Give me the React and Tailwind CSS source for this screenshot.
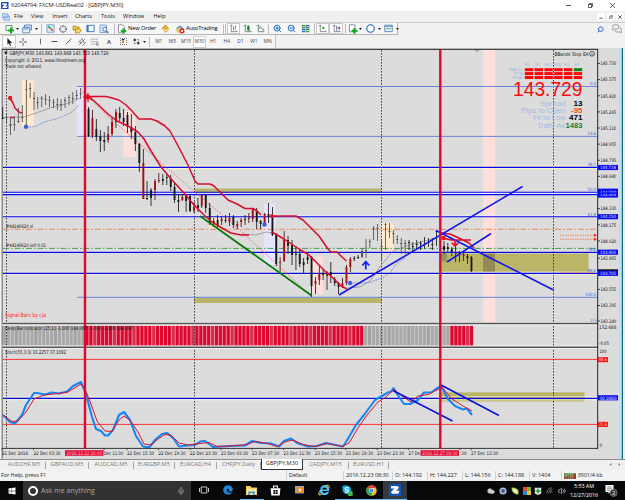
import React from "react";
import clsx from "clsx";
import { Mic, Search, MessagesSquare, Cloud, Wifi, Volume2, Crosshair, ZoomIn, ZoomOut, Clock } from "lucide-react";
import { FaWindows, FaEdge, FaInternetExplorer } from "react-icons/fa";

const UI = "font-['Open_Sans','Noto_Sans',sans-serif]";

// [x, high, low, bodyTop, bodyBottom, color]
const K = "#1a1a1a";
const R = "#a80f10";
const G = "#505050";
const candles = [
  [2.7, 107, 119, 118, 119, K],
  [6.5, 113, 124, 117, 118, G],
  [10.4, 117, 135, 124, 126, G],
  [14.3, 116, 131, 124, 125, G],
  [18.3, 108, 123, 121, 122, G],
  [22.3, 105, 122, 117, 118, G],
  [26.3, 80, 127, 89, 90, G],
  [30.1, 83, 98, 88, 89, G],
  [34, 92, 110, 98, 99, G],
  [37.7, 97, 109, 102, 103, G],
  [41.7, 96, 107, 98, 99, G],
  [45.6, 94, 105, 99, 100, G],
  [49.5, 96, 107, 100, 101, G],
  [53.4, 99, 108, 102, 103, G],
  [57.3, 98, 110, 104, 105, G],
  [61, 99, 111, 104, 105, G],
  [65, 97, 108, 100, 101, G],
  [69, 95, 105, 97, 98, G],
  [72.8, 92, 104, 98, 99, G],
  [76.7, 90, 100, 95, 96, G],
  [80.6, 88, 99, 93, 94, G],
  [88.5, 107, 137, 109, 136, K],
  [92.4, 110, 138, 118, 136, R],
  [96.3, 119, 141, 129, 137, K],
  [100.3, 130, 152, 136, 141, K],
  [104.2, 132, 151, 140, 142, K],
  [108.1, 126, 143, 134, 140, R],
  [112, 118, 136, 122, 134, R],
  [115.9, 109, 128, 112, 122, R],
  [119.7, 107, 121, 113, 118, K],
  [123.6, 109, 126, 118, 122, K],
  [127.4, 112, 133, 115, 127, K],
  [131.3, 114, 139, 127, 132, K],
  [135.3, 126, 151, 132, 144, K],
  [139.3, 143, 172, 144, 163, K],
  [143.3, 149, 199, 163, 199, R],
  [147, 181, 200, 198, 199, K],
  [151, 188, 206, 190, 198, K],
  [155, 179, 200, 181, 190, R],
  [158.8, 173, 183, 180, 181, R],
  [162.8, 174, 185, 179, 181, K],
  [166.8, 174, 185, 177, 178, K],
  [170.7, 175, 191, 178, 187, K],
  [174.5, 182, 203, 187, 200, K],
  [178.4, 194, 212, 200, 202, K],
  [182.3, 194, 201, 197, 200, R],
  [186.1, 194, 212, 195, 201, K],
  [190, 195, 212, 196, 211, K],
  [194, 202, 213, 207, 211, R],
  [197.9, 198, 212, 205, 208, K],
  [201.7, 194, 208, 195, 206, R],
  [205.7, 195, 213, 195, 208, K],
  [209.7, 203, 225, 208, 223, K],
  [213.7, 218, 227, 221, 223, K],
  [217.6, 215, 229, 220, 225, K],
  [221.6, 216, 225, 219, 221, R],
  [225.5, 215, 223, 220, 221, K],
  [229.4, 213, 226, 218, 222, R],
  [233.3, 215, 228, 217, 225, K],
  [237.2, 221, 229, 224, 226, R],
  [241.1, 218, 227, 220, 222, R],
  [245, 215, 225, 219, 220, K],
  [248.8, 213, 223, 218, 219, R],
  [252.7, 208, 222, 209, 219, R],
  [256.7, 208, 229, 211, 222, K],
  [260.6, 220, 229, 221, 224, K],
  [264.6, 213, 226, 214, 224, R],
  [268.5, 203, 223, 214, 217, K],
  [272.4, 207, 236, 216, 235, K],
  [276.2, 233, 266, 235, 264, K],
  [280.1, 257, 272, 262, 263, R],
  [284.1, 231, 262, 240, 261, R],
  [288, 236, 254, 240, 246, K],
  [292, 240, 265, 245, 255, K],
  [295.9, 246, 270, 254, 255, K],
  [299.7, 249, 267, 254, 264, K],
  [303.6, 258, 274, 262, 265, K],
  [307.6, 255, 264, 257, 260, K],
  [311.5, 256, 297, 257, 286, K],
  [315.4, 277, 294, 281, 284, R],
  [319.3, 266, 285, 273, 280, R],
  [323.1, 269, 280, 273, 275, K],
  [327, 271, 290, 272, 276, R],
  [330.8, 262, 283, 272, 275, K],
  [334.7, 277, 286, 279, 283, K],
  [338.5, 282, 294, 283, 287, K],
  [342.4, 278, 288, 283, 287, R],
  [346.4, 265, 285, 267, 283, R],
  [350.3, 257, 272, 259, 267, R],
  [354.2, 256, 261, 258, 259, K],
  [358.1, 255, 259, 257, 258, K],
  [362, 248, 258, 251, 257, G],
  [366, 239, 258, 250, 251, G],
  [369.8, 239, 248, 241, 242, G],
  [373.6, 226, 240, 228, 229, G],
  [377.5, 224, 241, 228, 229, G],
  [381.6, 239, 260, 246, 247, G],
  [385.5, 223, 250, 224, 225, G],
  [389.4, 223, 238, 231, 232, G],
  [393.3, 230, 244, 233, 234, G],
  [397.2, 235, 244, 239, 240, G],
  [401.2, 238, 254, 243, 244, G],
  [405.1, 240, 254, 243, 244, G],
  [409, 240, 250, 242, 243, K],
  [412.8, 242, 252, 246, 247, K],
  [416.7, 240, 250, 244, 245, K],
  [420.6, 241, 250, 243, 244, K],
  [424.5, 237, 249, 244, 245, K],
  [428.4, 238, 247, 242, 243, K],
  [432.3, 238, 250, 244, 245, K],
  [436.5, 230, 246, 231, 232, K],
  [444, 241, 254, 246, 250, K],
  [447.8, 243, 252, 247, 249, K],
  [451.7, 247, 256, 249, 252, K],
  [455.6, 244, 262, 253, 254, R],
  [459.5, 251, 262, 253, 255, K],
  [463.5, 251, 261, 254, 256, R],
  [467.4, 254, 264, 256, 258, K],
  [471.4, 256, 272, 257, 271, K],
];

const axis = [
  ["145.730", 63.5],
  ["145.575", 79.6],
  ["145.420", 95.8],
  ["145.265", 111.9],
  ["145.110", 128],
  ["144.955", 144.1],
  ["144.795", 160.3],
  ["144.640", 176.4],
  ["144.330", 208.6],
  ["144.175", 224.8],
  ["144.020", 240.9],
  ["143.865", 258.2],
  ["143.555", 289.4],
  ["143.395", 305.5],
  ["143.240", 321],
];

const blueTags = [
  ["144.728", 167.5],
  ["144.500", 191.2],
  ["144.460", 195],
  ["144.250", 216.7],
  ["143.904", 252.2],
  ["143.705", 273.3],
];

// the labels at 104, 411 and 459 are clipped by the event tags
const times = [
  ["21 Dec 2016", 2, 26],
  ["22 Dec 03:30", 33.5, 27],
  ["Dec 11:30", 104, 19],
  ["22 Dec 15:30", 127, 27],
  ["22 Dec 19:30", 158.5, 27],
  ["22 Dec 23:30", 190, 27],
  ["23 Dec 03:30", 221, 27],
  ["23 Dec 07:30", 252, 27],
  ["23 Dec 11:30", 283.5, 27],
  ["23 Dec 15:30", 315, 27],
  ["23 Dec 19:30", 346, 27],
  ["23 Dec 23:30", 377, 27],
  ["27 De", 408.5, 11.5],
  [":30", 460, 6.5],
  ["27 Dec 13:30", 471, 27],
];

const fibs = [
  ["0.0", 86.5],
  ["23.6", 136.5],
  ["38.2", 167],
  ["50.0", 192],
  ["61.8", 217],
  ["78.6", 252.5],
  ["88.6", 273],
  ["100.0", 297.4],
  ["113", 323.5],
];

const T = ({ x, y, w, s = 5, fill = "#111", children, ...rest }) => (
  <text x={x} y={y} textLength={w} lengthAdjust="spacingAndGlyphs" fontSize={s} fill={fill} {...rest}>
    {children}
  </text>
);

const DeepBars = () => {
  const bars = [];
  for (let i = 0; i < 120; i++) {
    const x = 3 + i * 3.925;
    const red = (x > 84 && x < 362) || x > 449;
    const soft = i % 5 === 3;
    bars.push(
      <rect
        key={i}
        x={x}
        y="325.8"
        width="3"
        height="20"
        fill={red ? (soft ? "#d62f50" : "#df062e") : soft ? "#a2a2a2" : "#a9a9a9"}
      />
    );
  }
  return (
    <g>
      <rect x="3" y="325.8" width="445" height="20" fill="#cdcdcd" />
      <rect x="86" y="325.8" width="277" height="20" fill="#e296a5" />
      <rect x="450" y="325.8" width="23" height="20" fill="#e296a5" />
      {bars}
    </g>
  );
};

const Chart = () => (
  <svg
    className="block shrink-0 font-['DejaVu_Sans_Condensed','DejaVu_Sans',sans-serif]"
    width="625"
    height="411"
    viewBox="0 48 625 411"
  >
    <rect x="0" y="48" width="625" height="411" fill="#dcdcdc" />
    <rect x="0" y="48" width="1.6" height="411" fill="#f4f4f4" />
    <rect x="1.6" y="48.6" width="1.1" height="410" fill="#707070" />

    {/* shaded zones */}
    <rect x="22" y="80" width="11.5" height="47" fill="#ffebcc" />
    <rect x="77" y="87" width="6.5" height="50" fill="#e4e5fa" />
    <rect x="123.5" y="111" width="12" height="46" fill="#ffdfdc" />
    <rect x="209.5" y="217" width="10" height="12" fill="#ffebcc" />
    <rect x="264" y="204" width="11.5" height="61" fill="#e4e5fa" />
    <rect x="311" y="257" width="12" height="37" fill="#ffdfdc" />
    <rect x="381.5" y="223" width="12" height="29" fill="#ffebcc" />
    <rect x="436" y="245" width="5" height="17" fill="#d5d9f0" />
    <rect x="483" y="50" width="12" height="273" fill="#ffdfdc" />
    <rect x="194" y="188.5" width="187.5" height="5.5" fill="#bbb56c" />
    <rect x="194" y="297.5" width="187.5" height="5.5" fill="#bbb56c" />
    <rect x="441" y="253.5" width="147.5" height="18.5" fill="#bbb568" />
    <rect x="441" y="253.5" width="6" height="8" fill="#8f965c" />
    <rect x="483" y="253.5" width="12" height="18.5" fill="#958956" />
    <rect x="441" y="392.3" width="143.5" height="9.2" fill="#bbb568" />
    <DeepBars />

    {/* session separators */}
    <g stroke="#333" strokeWidth="0.9" strokeDasharray="1.6 1.4">
      <path d="M6.5 50V448M194.5 50V448M381.5 50V448M553.5 50V448" />
    </g>

    {/* horizontal levels */}
    <path d="M77 86.5H597M77 136.4H597M77 297.3H597" stroke="#6685dc" />
    <path d="M3 165.9H597M3 168.7H597" stroke="#fdf9c5" strokeWidth="0.9" />
    <path d="M3 251.2H597M3 274.8H597M3 272.1H597" stroke="#f4f2cf" strokeWidth="0.8" />
    <path d="M3 193.5H597M3 215.3H597" stroke="#eaf0ff" strokeWidth="0.8" />
    <path d="M3 167.4H597M3 192.3H597M3 194.6H597M3 216.7H597M3 252.4H597M3 273.4H597" stroke="#0808ee" strokeWidth="1.1" />
    <path d="M3 229.3H597" stroke="#ee7a48" strokeWidth="0.9" strokeDasharray="6 2 1.5 2" />
    <path d="M3 248.4H597" stroke="#35984a" strokeWidth="0.9" strokeDasharray="6 2 1.5 2" />
    <path d="M560 235.3H595M560 239.3H595M560 272.6H595" stroke="#f08464" strokeDasharray="1.5 1" />
    <path d="M594 233.5l3 1.8-3 1.8zM594 237.5l3 1.8-3 1.8z" fill="#f03c20" />

    {/* moving averages */}
    <g fill="none" strokeWidth="0.7">
      <path d="M3 117.5L24 117 36 113 50 108 66 104 80 98" stroke="#888" />
      <path d="M27 127L36 126.5 44 122 56 119 66 115 72 112 79 105" stroke="#4267dc" strokeDasharray="1.6 1" />
      <path d="M80 89L112 120 139 143 160 162 196 193 240 230 311 296" stroke="#f0574f" strokeDasharray="1.8 1.2" />
      <path d="M242 234L256 235 266 232 274 233" stroke="#888" />
      <path d="M348 288L360 287 370 281 382 264 393 251 409 245 436 238" stroke="#888" />
      <path d="M350 283L368 283 382 278 390 273 396 264 405 258" stroke="#4267dc" strokeDasharray="1.6 1" />
    </g>

    {candles.map(([x, h, l, t, b, c]) => (
      <g key={x}>
        <rect x={x - 0.4} y={h} width="0.85" height={l - h} fill={c === R ? "#491014" : c} />
        <rect x={x - 0.9} y={t} width="1.9" height={b - t} fill={c} />
      </g>
    ))}

    {/* bands */}
    <g fill="none" stroke="#d70d2d" strokeWidth="1.5" strokeLinejoin="round">
      <path d="M10 98L13 103 15 108 19 112 22 113M10 117.5L14 117.5" />
      <path d="M87 96.5H106L112 98 119 100 126 105 132 111 139 119H151L157 121 165 126 170 131 176 142 188 165 195 181 198 184H210L214 186 219 191 228 200 237 204 245 208.5H253L257 211 261 215" />
      <path d="M87 96.5L93 100 108 114 117 121 128 126 138 132 144 139 151 151 161 167 172 180 184 193 194 205 204 215 212 222 222 228 231 233 241 235H249" />
      <path d="M272 216H296L303 220 310 227 319 236 328 249 331 252H337L342 257 346.5 261" />
      <path d="M272 232L284 239 299 249 309 255 316 262 325 271 334 279 341 286 347 289" />
      <path d="M441 233L450 234 459 238 469 243 474 248M443 238L451 240H471" />
    </g>
    <path d="M200 216L311.5 295.5" stroke="#087a0c" strokeWidth="1.8" />
    <path d="M339 295L522.5 186.5M436 230.5L553.5 290M447 262L491 233.5" stroke="#1414ec" strokeWidth="1.6" />
    <g fill="#e81818">
      <circle cx="10.2" cy="98" r="2.2" />
      <circle cx="87.5" cy="97" r="2.4" />
      <circle cx="272" cy="216" r="2" />
      <circle cx="443.5" cy="238" r="2.2" />
    </g>
    <g fill="#3262e0">
      <circle cx="26" cy="126.8" r="2.2" />
      <circle cx="264.5" cy="224.5" r="2.2" />
      <circle cx="350" cy="283" r="2.2" />
    </g>
    <path d="M365.8 269.5V262M362.3 265.5L365.8 261.7 369.3 265.5" fill="none" stroke="#1228f0" strokeWidth="1.8" />
    <path d="M455 239V246M451.8 242.8L455 246 458.2 242.8" fill="none" stroke="#e01830" strokeWidth="1.8" />
    <path d="M83 97h10M88 93v9" stroke="#d70d2d" strokeWidth="1.2" />

    {/* stochastic */}
    <path d="M3 359.4H597M3 424.4H597" stroke="#fc3434" />
    <path d="M3 396.8H597M3 399.9H597" stroke="#f7f5d4" strokeWidth="0.8" />
    <path d="M3 398.3H597" stroke="#0b0be8" strokeWidth="1.3" />
    <path
      d="M3 415L10 422 15 423.5 22 415 26 405 34 393H37L45 394.5 52 392.5 59 393.5 67 391.5 73 386 81 382 86 394 92 417 96 429 101 431 105 435.5H108L113 430 119 415 124 412 130 420 136 436 143 446.5 149 447.5 156 439 162 434 167 433 173 438 179 446.5 187 445.5 195 445 200 441.5 205 441 213 447 230 446 245 445.5 252 441 261 443 271 443.5 279 446.5 284 441 291 438.5 297 443 308 446.5 317 446 326 443 343 446.5 346 442 356 425 364 415 375 400 382 396 388 392.5 391 391.5 393.5 388 397 394 404 404H410L418 400 424 392.5H431L436 389 441 386 448 399 455 406 463 409.5 467 408.5 472 415"
      fill="none"
      stroke="#1686f5"
      strokeWidth="2.1"
      strokeLinejoin="round"
    />
    <path
      d="M3 415L12 421.5 18 421 26 412 34 399 44 395 58 393.5 68 392 76 387 81 384 85 389 91 404 97 421 105 431 112 431.5 119 420 124 416 130 420 138 432 144 444 151 445 158 439 165 434.5 171 435 179 443 188 445 200 443.5 209 442.5 217 446.5 230 446 247 444.5 255 441.5 266 443 277 446.5 286 441.5 293 440 303 444.5 314 446.5 328 443.5 342 446.5 349 443 358 428 367 415 378 402 386 397 394 389.5 402 396 411 402 418 396 428 394.5 437 390 442 387 452 399 463 406 472 411"
      fill="none"
      stroke="#db1430"
      strokeWidth="1"
    />
    <path d="M393 390.5L452.5 421M441 385L499 415.5" stroke="#1010dc" strokeWidth="1.6" />

    {/* panel borders */}
    <path d="M2 49.3H598" stroke="#444" strokeWidth="1.2" />
    <path d="M2 323.8H598M2 347.2H598" stroke="#f5f5f5" strokeWidth="3.2" />
    <path d="M2 323.5H598M2 347.2H598" stroke="#555" strokeWidth="1.5" />
    <path d="M2 448.4H598" stroke="#222" strokeWidth="0.9" />
    <path d="M597.7 49V449" stroke="#111" strokeWidth="0.9" />

    {/* event lines */}
    <path d="M85 49.5V449M440.3 49.5V449" stroke="#df0630" strokeWidth="2.4" />
    <path d="M474.5 50h5l-2.5 2.5z" fill="#aaa" />
    <path d="M4 51.8h3.6l-1.8 2.6z" fill="#111" />

    {/* labels */}
    <T x="9.5" y="55" w="99">GBPJPY,M30  143.861 143.868 143.723 143.729</T>
    <T x="5" y="61.8" w="80">Copyright © 2011,  www.lifesdream.org</T>
    <T x="5" y="67.5" w="37">Trade not allowed.</T>
    <T x="6" y="228" w="27" s="4.8">#44146620 sl</T>
    <T x="6" y="247" w="40" s="4.8">#44146620 sell 0.01</T>
    <T x="5" y="317" w="41" s="5.8" fill="#ff1c1c">Signal Bars by cja</T>
    <T x="5" y="330" w="128">Deep Bar Indicator (25,1) -1.000 144.067 -1.000 -1.000 144.067</T>
    <T x="5" y="353.6" w="61">Stoch(55,3,3) 33.2257 37.1082</T>

    {/* signal panel */}
    <T x="554.5" y="55.8" w="34">BBands Stop EA</T>
    <circle cx="592" cy="53.8" r="2.4" fill="none" stroke="#222" strokeWidth="0.7" />
    <path d="M590.8 53.4h.6M592.6 53.4h.6M590.8 55q1.2-1 2.4 0" stroke="#222" strokeWidth="0.5" fill="none" />
    <g fontFamily="Liberation Sans">
      {["M1", "M5", "M15", "M30", "H1", "H4"].map((m, i) => (
        <T key={m} x={525 + i * 9.9 - (m.length > 2 ? 0.5 : 0)} y="66.2" w={m.length > 2 ? 7.5 : 5} s="4" fill="#9db5db">
          {m}
        </T>
      ))}
      {["MACD", "STR", "EMA"].map((m, r) => (
        <g key={m}>
          <T x={m === "MACD" ? 509 : m === "STR" ? 513.5 : 512.5} y={71.3 + r * 3.9} w={m === "MACD" ? 13 : 9.5} s="3.4" fill="#9db5db">
            {m}
          </T>
          {[0, 1, 2, 3, 4, 5].map((c) => (
            <rect key={c} x={524.8 + c * 9.8} y={68.2 + r * 3.9} width="8.4" height="3" fill={r === 0 && c === 5 ? "#0b850b" : "#fb0707"} />
          ))}
        </g>
      ))}
      <T x="513" y="96" w="69.5" s="20" fill="#f80c0c">143.729</T>
      <T x="540" y="105.8" w="26" s="8" fill="#a3bbe0">Spread</T>
      <T x="521" y="113.1" w="45" s="8" fill="#a3bbe0">Pips to Open</T>
      <T x="533.5" y="120.3" w="32.5" s="8" fill="#a3bbe0">Hi to Low</T>
      <T x="538" y="127.8" w="27" s="8" fill="#a3bbe0">Daily Av</T>
      <T x="573.5" y="105.8" w="9" s="8" fill="#000" fontWeight="700">13</T>
      <T x="571" y="113.1" w="11.5" s="8" fill="#ff4a18" fontWeight="700">-95</T>
      <T x="569" y="120.3" w="13.5" s="8" fill="#000" fontWeight="700">471</T>
      <T x="565.5" y="127.8" w="17" s="8" fill="#15803a" fontWeight="700">1483</T>
    </g>

    {fibs.map(([t, y]) => (
      <T key={t} x={597 - (t.length > 4 ? 12 : t.length > 3 ? 9.5 : 7)} y={y - 1.2} w={t.length > 4 ? 11 : t.length > 3 ? 8.5 : 6.3} s="4.4" fill="#4468dc">
        {t}
      </T>
    ))}

    {/* price axis */}
    {axis.map(([t, y]) => (
      <g key={t}>
        <path d={`M597.5 ${y}h2.5`} stroke="#222" strokeWidth="0.8" />
        <T x="600.5" y={y + 1.8} w="15.8" s="4.8">{t}</T>
      </g>
    ))}
    <rect x="598" y="269.3" width="20" height="5" fill="#111" />
    {blueTags.map(([t, y]) => (
      <g key={t}>
        <rect x="598" y={y - 2.6} width="20" height="5.2" fill="#0b0bf2" />
        <T x="600" y={y + 1.4} w="16" s={y > 190 && y < 196 ? "3.2" : "4.4"} fill="#dfe4ff">{t}</T>
      </g>
    ))}
    <T x="599" y="329" w="17.5" s="4.8">152.688</T>
    <T x="599" y="345.4" w="10" s="4.8">-0.05</T>
    <T x="599.5" y="353" w="7" s="4.8">100</T>
    <T x="599.5" y="447" w="2.6" s="4.8">0</T>
    <rect x="598" y="357" width="10" height="5.2" fill="#f81616" />
    <T x="599" y="361.3" w="8" s="4.6" fill="#ffd9d9">88.6</T>
    <rect x="598" y="395.2" width="20" height="5.2" fill="#0b0bf2" />
    <T x="599.5" y="399.5" w="17" s="4.6" fill="#dfe4ff">50.0000</T>
    <rect x="598" y="421.8" width="10" height="5.2" fill="#f81616" />
    <T x="599" y="426.1" w="8" s="4.6" fill="#ffd9d9">21.6</T>

    {/* time axis */}
    {times.map(([t, x, w]) => (
      <g key={t}>
        <path d={`M${x} 448.5v1.6`} stroke="#222" strokeWidth="0.7" />
        <T x={x} y="454.7" w={w} s="4.8">{t}</T>
      </g>
    ))}
    <rect x="65" y="450.2" width="38.5" height="5.6" fill="#e00d36" />
    <T x="66.5" y="454.8" w="35.5" s="4.8" fill="#ffc4ce">2016.12.22 10:00</T>
    <rect x="420.5" y="450.2" width="38.5" height="5.6" fill="#e00d36" />
    <T x="422" y="454.8" w="35.5" s="4.8" fill="#ffc4ce">2016.12.27 09:30</T>

    {/* window edge */}
    <rect x="618.6" y="48" width="3.2" height="411" fill="#c3dcf0" />
    <rect x="621.8" y="48" width="1.2" height="411" fill="#176a78" />
    <rect x="623" y="48" width="2" height="411" fill="#e6eef2" />
  </svg>
);

const Slot = ({ w, className, children }) => (
  <span className={clsx("flex h-full shrink-0 items-center justify-center", w, className)}>{children}</span>
);

const Caret = ({ w = "w-[5px]" }) => (
  <Slot w={w}>
    <svg width="3" height="2" viewBox="0 0 3 2"><path d="M0 0h3L1.5 2z" fill="#222" /></svg>
  </Slot>
);

const Sep = ({ w = "w-[6px]" }) => (
  <Slot w={w}>
    <span className="h-[10px] w-px bg-[#bdbdbd]" />
  </Slot>
);

const Ico = ({ children, size = 10 }) => (
  <svg width={size} height={size} viewBox="0 0 10 10" fill="none">{children}</svg>
);

const Axes = () => <path d="M2.5 1v7.5H9M1 2.5L2.5 1 4 2.5M7.7 7L9.2 8.5" stroke="#5c6470" strokeWidth="0.8" />;

const Toolbar = () => (
  <div className="flex h-[13px] shrink-0 items-stretch border-t border-[#cfcfcf] bg-[#f1f1f1]">
    <div className="flex w-[398px] items-center border-r border-b border-[#b5b5b5] bg-[#f6f6f6] pl-[4px]">
      <Slot w="w-[11px]">
        <Ico>
          <path d="M1 1.5h6v5H1z" fill="#fff" stroke="#3d7f4c" strokeWidth="0.8" />
          <path d="M6 3.5v6M3 6.5h6" stroke="#14ad21" strokeWidth="2.2" />
        </Ico>
      </Slot>
      <Caret w="w-[5px]" />
      <Slot w="w-[14px]">
        <Ico>
          <path d="M2.5 1h7v5h-7z" fill="#c8ddf5" stroke="#4e79ae" strokeWidth="0.8" />
          <path d="M.7 3.5h7v5.3h-7z" fill="#eaf3fd" stroke="#4e79ae" strokeWidth="0.8" />
          <path d="M1.5 5h5" stroke="#5b8bca" />
        </Ico>
      </Slot>
      <Caret w="w-[5px]" />
      <Sep w="w-[5px]" />
      <Slot w="w-[12px]">
        <Ico size={9}>
          <path d="M1 .8h8v8.4H1z" fill="#d9edff" stroke="#5188c5" strokeWidth="0.8" />
          <path d="M2.5 2.5L5 5" stroke="#1ba12a" strokeWidth="1.9" />
          <path d="M5 5l2.5 2.5" stroke="#ec4824" strokeWidth="1.9" />
        </Ico>
      </Slot>
      <Slot w="w-[14px]"><Crosshair size={8} color="#4c5361" strokeWidth={2} /></Slot>
      <Slot w="w-[14px]">
        <Ico>
          <path d="M1 2h3l1 1h2v3H1z" fill="#f3c849" stroke="#a87b16" strokeWidth="0.7" />
          <path d="M3.5 5h3l1-1.2L9.3 7 7 9H3.5z" fill="#f6d467" stroke="#a87b16" strokeWidth="0.7" />
        </Ico>
      </Slot>
      <Slot w="w-[13px]">
        <Ico size={9}>
          <path d="M1 1.5h8v7H1z" fill="#fff" stroke="#2f6fb6" />
          <path d="M1 1.5h2v7H1z" fill="#3c7fc7" />
        </Ico>
      </Slot>
      <Slot w="w-[14px]">
        <Ico>
          <path d="M1 1h6.5v7.5H1z" fill="#dcebfa" stroke="#6a94c4" strokeWidth="0.8" />
          <circle cx="5.8" cy="5.3" r="2" fill="#fff" stroke="#4376b4" />
          <path d="M7.3 7L9.3 9" stroke="#4376b4" strokeWidth="1.2" />
        </Ico>
      </Slot>
      <Sep w="w-[6px]" />
      <Slot w="w-[10px]">
        <Ico>
          <path d="M1.5.8h4l2 2v6h-6z" fill="#fff" stroke="#6d7c85" strokeWidth="0.8" />
          <path d="M6.5 4.2v5.4M3.8 6.9h5.4" stroke="#18ac24" strokeWidth="2" />
        </Ico>
      </Slot>
      <span className="w-[30px] shrink-0 pl-px text-[5.7px] tracking-[-0.12px] whitespace-nowrap">New Order</span>
      <Slot w="w-[16px]">
        <Ico size={9}>
          <path d="M1 5.3L4.8 1 9 5.6 5.2 9z" fill="#e7b232" stroke="#9f6f10" strokeWidth="0.7" />
          <path d="M1 5.5L5 7.5 9 5.6" stroke="#fff0b4" />
        </Ico>
      </Slot>
      <Slot w="w-[13px]">
        <Ico>
          <path d="M1.5 5q3-6 7 0z" fill="#76a9e0" stroke="#3c6ba6" strokeWidth="0.6" />
          <circle cx="4" cy="6.2" r="2.5" fill="#eac05a" />
          <circle cx="7" cy="7" r="2.5" fill="#e32a1e" />
          <path d="M6.1 6.1h1.8v1.8H6.1z" fill="#fff" />
        </Ico>
      </Slot>
      <span className="w-[36px] shrink-0 text-[5.7px] tracking-[-0.1px] whitespace-nowrap">AutoTrading</span>
      <Sep w="w-[2px]" />
      <Sep w="w-[3px]" />
      <Slot w="w-[13px]" className="border border-[#c9c9c9] bg-white">
        <Ico size={9}><Axes /><path d="M5 3v4M7 2v4M7 2.5h1" stroke="#22923a" strokeWidth="0.9" /></Ico>
      </Slot>
      <Slot w="w-[15px]">
        <Ico size={9}><Axes /><path d="M4.5 2.5h3V7h-3z" fill="#19a93a" /><path d="M6 1v7" stroke="#146f26" strokeWidth="0.7" /></Ico>
      </Slot>
      <Slot w="w-[11px]">
        <Ico size={9}><Axes /><path d="M3 5.5q2-4 3-1t3 1" stroke="#22923a" strokeWidth="0.9" /></Ico>
      </Slot>
      <Sep w="w-[5px]" />
      <Slot w="w-[13px]"><ZoomIn size={9} color="#2f72c1" strokeWidth={2.6} fill="#cfe6fb" /></Slot>
      <Slot w="w-[14px]"><ZoomOut size={9} color="#2f72c1" strokeWidth={2.6} fill="#cfe6fb" /></Slot>
      <Slot w="w-[14px]">
        <Ico size={9}>
          <path d="M1 1h3.8v3.8H1zM5.4 5.4h3.8v3.8H5.4z" fill="#2b9a3e" />
          <path d="M5.4 1h3.8v3.8H5.4zM1 5.4h3.8v3.8H1z" fill="#2b5fb4" />
          <path d="M1.6 3h2.6M6 3h2.6M1.6 7.4h2.6M6 7.4h2.6" stroke="#fff" />
        </Ico>
      </Slot>
      <Sep w="w-[4px]" />
      <Slot w="w-[13px]" className="border border-[#c9c9c9] bg-white">
        <Ico size={9}><Axes /><path d="M5 2.5v4L8 4.5z" fill="#18a92e" /></Ico>
      </Slot>
      <Slot w="w-[14px]" className="border border-[#c9c9c9] bg-white">
        <Ico size={9}><Axes /><path d="M5.3 2v5.5" stroke="#2a62a9" /><path d="M9 2.5v4L6 4.5z" fill="#c23324" /></Ico>
      </Slot>
      <Sep w="w-[4px]" />
      <Slot w="w-[11px]">
        <Ico>
          <path d="M1.5.8h5.3v7H1.5z" fill="#fff" stroke="#6d7c85" strokeWidth="0.8" />
          <path d="M6.5 4v5.8M3.6 6.9h5.8" stroke="#18ac24" strokeWidth="2.2" />
        </Ico>
      </Slot>
      <Caret w="w-[5px]" />
      <Slot w="w-[14px]"><Clock size={9} color="#1d65bd" strokeWidth={3} fill="#fff" /></Slot>
      <Caret w="w-[4px]" />
      <Slot w="w-[14px]">
        <Ico size={9}>
          <path d="M.8 1.3h8.4v7.2H.8z" fill="#eaf3fc" stroke="#4b7cb3" strokeWidth="0.9" />
          <path d="M.8 2.5h8.4" stroke="#4b7cb3" />
          <path d="M2 5.8l2-1 2 1 2-1.3" stroke="#27923b" strokeWidth="0.8" />
        </Ico>
      </Slot>
      <Caret w="w-[4px]" />
    </div>
    <div className="ml-auto flex items-center gap-[8px] pr-[3px]">
      <Search size={7} color="#3b69d4" strokeWidth={3.4} className="-scale-x-100" />
      <MessagesSquare size={10} color="#8f8f8f" strokeWidth={2} />
    </div>
  </div>
);

const frames = ["M1", "M5", "M15", "M30", "H1", "H4", "D1", "W1", "MN"];

const DrawBar = () => (
  <div className="flex h-[13px] shrink-0 bg-[#f1f1f1]">
    <div className="flex w-[276px] items-center border-r border-[#c4c4c4] bg-[#f6f6f6] pl-[2px]">
      <Slot w="w-[14px]" className="border border-[#cdcdcd] bg-white">
        <Ico size={8}><path d="M3 0v8.5l2-1.8L6.3 10l1.4-.7-1.4-3H9z" fill="#222" /></Ico>
      </Slot>
      <Slot w="w-[14px]"><Ico size={8}><path d="M5 0v4M5 6v4M0 5h4M6 5h4" stroke="#444" /></Ico></Slot>
      <Slot w="w-[3px]" />
      <Slot w="w-[14px]"><Ico size={7}><path d="M5 1v8" stroke="#333" /></Ico></Slot>
      <Slot w="w-[14px]"><Ico size={7}><path d="M1 5h8" stroke="#333" strokeWidth="1.3" /></Ico></Slot>
      <Slot w="w-[14px]"><Ico size={7}><path d="M1 9l8-8" stroke="#333" /></Ico></Slot>
      <Slot w="w-[13px]">
        <Ico size={8}><path d="M0 6l6-6M1 9l8-8M5 10l5-5M2 3.5l2 4M5 1l3 6" stroke="#555" strokeWidth="0.8" /></Ico>
      </Slot>
      <Slot w="w-[14px]">
        <Ico size={8}><path d="M0 1.5h9M0 4.5h9M0 7.5h6" stroke="#666" strokeDasharray="1.5 .6" strokeWidth="0.8" /><path d="M7 6.5h3M7 9h3M7 6v3" stroke="#444" strokeWidth="0.7" /></Ico>
      </Slot>
      <Slot w="w-[14px]" className="text-[6px] font-semibold text-[#333]">A</Slot>
      <Slot w="w-[14px]"><span className="flex size-[7px] items-center justify-center border border-dotted border-[#777] text-[5px] leading-none font-bold">T</span></Slot>
      <Slot w="w-[12px]">
        <Ico size={7}><path d="M0 3l2.5-2.5L5 3 2.5 5.5zM5 7l2.5-2.5L10 7 7.5 9.5z" fill="#444" /><path d="M2 6v2h2M6 2h2v2" stroke="#444" strokeWidth="0.9" /></Ico>
      </Slot>
      <Caret w="w-[5px]" />
      <Sep w="w-[5px]" />
      {frames.map((f) => (
        <span
          key={f}
          className={clsx(
            "flex h-[12px] w-[13.6px] shrink-0 items-center justify-center text-[4.9px] text-[#444]",
            f === "M30" && "border border-[#cfcfcf] bg-white"
          )}
        >
          {f}
        </span>
      ))}
    </div>
  </div>
);

const menus = [
  ["File", "w-[17px]"],
  ["View", "w-[21.5px]"],
  ["Insert", "w-[22.5px]"],
  ["Charts", "w-[26px]"],
  ["Tools", "w-[22px]"],
  ["Window", "w-[30.5px]"],
  ["Help", "w-[14px]"],
];

const Logo = ({ size }) => (
  <svg width={size} height={size} viewBox="0 0 16 16">
    <rect width="16" height="16" rx="1" fill="#1253b8" />
    <path d="M3 2.5h8l2.5 2.5-4 4H14L12.5 13H4.5L2.5 11l4.5-5H2.5z" fill="#fff" />
  </svg>
);

const Header = () => (
  <>
    <div className="flex h-[11px] shrink-0 items-center bg-white pl-px">
      <Logo size={7.5} />
      <span className="ml-[2.5px] text-[5.7px] tracking-[-0.09px] whitespace-nowrap text-[#222]">
        92044794: FXCM-USDReal02 - [GBPJPY,M30]
      </span>
      <div className="ml-auto flex items-center gap-[17px] pr-[10px] text-[#333]">
        <Ico size={5}><path d="M0 5h10" stroke="#222" strokeWidth="1.6" /></Ico>
        <Ico size={5}><path d="M.8 3h6.2v6.2H.8zM3 3V.8h6.2V7H7" stroke="#222" strokeWidth="1.5" /></Ico>
        <Ico size={5}><path d="M0 0l10 10M10 0L0 10" stroke="#222" strokeWidth="1.4" /></Ico>
      </div>
    </div>
    <div className="flex h-[11px] shrink-0 items-center bg-[#f0f0f0] pl-[2px] text-[5.6px] text-[#111]">
      <Slot w="w-[12px]" className="justify-start">
        <Ico size={8}>
          <path d="M.5 1h7v5h-7zM2.5 4h7v5h-7z" fill="#d5e8fb" stroke="#5d97d6" strokeWidth="0.9" />
        </Ico>
      </Slot>
      {menus.map(([m, w]) => (
        <span key={m} className={clsx("shrink-0", w)}>{m}</span>
      ))}
      <div className="ml-auto flex items-center gap-[1.5px] pr-px">
        <Slot w="w-[8px]" className="h-[7px]! bg-white"><Ico size={4}><path d="M1 8h8" stroke="#333" strokeWidth="2" /></Ico></Slot>
        <Slot w="w-[8px]" className="h-[7px]! bg-white"><Ico size={4}><path d="M1 4h5v5H1zM4 3V1h5v5H7" stroke="#4b5e7c" strokeWidth="1.6" /></Ico></Slot>
        <Slot w="w-[8px]" className="h-[7px]! bg-white"><Ico size={4}><path d="M1 1l8 8M9 1L1 9" stroke="#333" strokeWidth="2" /></Ico></Slot>
      </div>
    </div>
  </>
);

const tabs = [
  ["AUDCHF,M5", "w-[43px]"],
  ["GBPAUD,M5", "w-[43px]"],
  ["AUDCAD,M5", "w-[45px]"],
  ["EURGBP,M5", "w-[41px]"],
  ["EURCAD,H4", "w-[42px]"],
  ["CHFJPY,Daily", "w-[44px]"],
  ["GBPJPY,M30", "w-[42px]"],
  ["CADJPY,M15", "w-[46px]"],
  ["EURUSD,H1", "w-[40px]"],
];

const Tabs = () => (
  <div className="flex h-[11px] shrink-0 items-start border-t border-[#8d8d8d] bg-[#f0f0f0] pl-[3px] text-[5.7px] text-[#777]">
    {tabs.map(([t, w]) => (
      <span
        key={t}
        className={clsx(
          "flex shrink-0 items-center justify-center whitespace-nowrap",
          w,
          t === "GBPJPY,M30" ? "-mt-px h-[11px] border border-t-0 border-[#333] bg-white text-[#222]" : "my-[1.5px] h-[7px] border-r border-[#a5a5a5]"
        )}
      >
        {t}
      </span>
    ))}
    <div className="ml-auto flex h-[9px] items-center gap-[6px] pr-[4px]">
      <Ico size={3}><path d="M8 0v10L2 5z" fill="#777" /></Ico>
      <Ico size={3}><path d="M2 0v10l6-5z" fill="#777" /></Ico>
    </div>
  </div>
);

const status = [
  ["Default", "w-[57px]"],
  ["2016.12.23 08:30", "w-[49px]"],
  ["O: 144.192", "w-[35px]"],
  ["H: 144.227", "w-[35px]"],
  ["L: 144.156", "w-[33px]"],
  ["C: 144.188", "w-[34px]"],
  ["V: 1404", "w-[32px]"],
];

const StatusBar = () => (
  <div className="flex h-[11px] shrink-0 items-center bg-[#f2f2f2] text-[5.5px] tracking-[-0.05px] text-[#222]">
    <span className="w-[286px] shrink-0 pl-px">For Help, press F1</span>
    {status.map(([t, w]) => (
      <span key={t} className={clsx("flex h-[9px] shrink-0 items-center border-l border-[#d2d2d2] pl-[2px] whitespace-nowrap", w)}>
        {t}
      </span>
    ))}
    <span className="flex h-[9px] items-center border-l border-[#d2d2d2] pl-[2px]">
      <svg width="12" height="6" viewBox="0 0 12 6">
        <path d="M0 0h12v6H0z" fill="#5b9b48" />
        <path d="M0 6V4h2V3h2V2h2v2h2V2h2V1h2v5z" fill="#9f3a30" />
        <path d="M2.2 0v6M4.4 0v6M6.6 0v6M8.8 0v6" stroke="#dbe4cc" strokeWidth="0.4" />
      </svg>
      <span className="ml-[1.5px]">3901/4 kb</span>
    </span>
  </div>
);

const TaskItem = ({ w = "w-[23.9px]", open, active, children }) => (
  <span className={clsx("flex h-full shrink-0 items-center justify-center border-b", w, open ? "border-[#76b9ed]" : "border-transparent", active && "bg-[#333b42]")}>
    {children}
  </span>
);

const Taskbar = () => (
  <div className="flex h-[19px] shrink-0 items-center bg-[#07080a]">
    <Slot w="w-[23px]"><FaWindows size={8} color="#fff" /></Slot>
    <div className="flex h-full w-[168px] shrink-0 items-center bg-[#313234]">
      <span className="ml-[5px] size-[10px] rounded-full border-2 border-white" />
      <span className="ml-[3px] text-[7px] whitespace-nowrap text-[#a9a9a9]">Ask me anything</span>
      <Mic size={8} color="#a8a8a8" className="mr-[6px] ml-auto" />
    </div>
    <TaskItem w="w-[25px]">
      <Ico size={10}><path d="M2.2 2h5.6v6H2.2zM.5 3v4M9.5 3v4" stroke="#ddd" strokeWidth="0.9" /></Ico>
    </TaskItem>
    <TaskItem><FaEdge size={10} color="#1b8be0" /></TaskItem>
    <TaskItem open>
      <Ico size={11}><path d="M0 1h4l1 1.2h5V9H0z" fill="#f5ce62" /><path d="M1 3.5h8V9H1z" fill="#ffe59b" /><path d="M2 6h6v3H6.5V7.5h-3V9H2z" fill="#3a9ad9" /></Ico>
    </TaskItem>
    <TaskItem>
      <Ico size={11}>
        <path d="M.5 3h9l-.7 6.5H1.2z" fill="#fff" />
        <path d="M3.3 3V.9h3.4V3" stroke="#fff" />
        <path d="M3 4.5h1.8v1.6H3zM5.2 4.5H7v1.6H5.2zM3 6.5h1.8v1.6H3zM5.2 6.5H7v1.6H5.2z" fill="#111" />
      </Ico>
    </TaskItem>
    <TaskItem>
      <Ico size={10}><path d="M0 1h9v7.5H0z" fill="#6caee0" /><path d="M1.5 2h7v6h-7z" fill="#f58a1f" /><path d="M4 3v4l3-2z" fill="#fff" /></Ico>
    </TaskItem>
    <TaskItem>
      <svg width="12" height="12" viewBox="0 0 12 12">
        <FaInternetExplorer size={11} color="#50c0f1" x="0.5" y="0.5" />
        <path d="M1 8.5Q-.5 12 3.5 10M7.5 2Q12 0 11 4" fill="none" stroke="#f1c433" />
      </svg>
    </TaskItem>
    <TaskItem open>
      <svg width="11" height="11" viewBox="0 0 11 11">
        <circle cx="4.8" cy="4.8" r="4.3" fill="#14a9ea" />
        <circle cx="2.5" cy="2.5" r="2.2" fill="#14a9ea" />
        <circle cx="7.5" cy="7.5" r="2.5" fill="#14a9ea" />
        <path d="M7 3.3Q4.7 1.8 3.3 3.2 2.6 4.6 4.8 4.9 7.2 5.4 6.4 6.7 4.7 8 2.7 6.3" fill="none" stroke="#fff" strokeWidth="1.1" />
        <rect x="6.2" y="6.5" width="4.5" height="4.5" fill="#45b649" />
      </svg>
    </TaskItem>
    <TaskItem open>
      <svg width="11" height="11" viewBox="0 0 20 20">
        <circle cx="10" cy="10" r="9.5" fill="#f4c321" />
        <path d="M10 10L1.8 5.2A9.5 9.5 0 0 1 18.3 5.5H10z" fill="#de4433" />
        <path d="M1.8 5.2A9.5 9.5 0 0 0 9 19.4L13 12 10 10z" fill="#30a44f" />
        <circle cx="10" cy="10" r="4.5" fill="#fff" />
        <circle cx="10" cy="10" r="3.5" fill="#4285f4" />
      </svg>
    </TaskItem>
    <TaskItem open active><Logo size={12} /></TaskItem>
    <div className="ml-auto flex h-full items-center gap-[3.8px]">
      <Cloud size={8} color="#c9c9c9" fill="#c9c9c9" />
      <Ico size={8}><circle cx="5" cy="5" r="4.5" fill="#aeb9ce" /><path d="M3 3h4v4H3z" fill="#345390" /></Ico>
      <Ico size={8}><path d="M1 1l5 .5 3 3V9L5 8.5 1.5 5z" fill="#e3f3a0" stroke="#7fa529" strokeWidth="0.8" /></Ico>
      <Ico size={8}><path d="M0 0h5v5H0z" fill="#e54e28" /><path d="M5 0h5v5H5z" fill="#7ab53b" /><path d="M0 5h5v5H0z" fill="#2c87d2" /><path d="M5 5h5v5H5z" fill="#f1bd2a" /></Ico>
      <Ico size={8}><path d="M1 1h8v7l-4 2-4-2z" fill="#e4f0e4" /><path d="M5 2v6M2 5h6" stroke="#2c9a43" strokeWidth="2" /></Ico>
      <Wifi size={8} color="#9a9a9a" className="-rotate-45" />
      <Volume2 size={8} color="#e0e0e0" />
    </div>
    <div className="ml-[4px] flex w-[28px] shrink-0 flex-col items-center text-[5.4px] leading-[9px] tracking-[-0.05px] whitespace-nowrap text-white">
      <span>5:53 AM</span>
      <span>12/27/2016</span>
    </div>
    <div className="ml-[7px] flex w-[20px] shrink-0 items-center">
      <svg width="13" height="13" viewBox="0 0 13 13">
        <path d="M.5 1h8v7H5L3.5 10V8h-3z" fill="#fff" />
        <path d="M2 3h5M2 4.8h5M2 6.4h3" stroke="#444" strokeWidth="0.6" />
        <circle cx="8.6" cy="8.8" r="3.6" fill="#333" stroke="#aaa" strokeWidth="0.6" />
        <text x="8.6" y="10.9" textAnchor="middle" fontSize="6" fill="#fff">2</text>
      </svg>
    </div>
  </div>
);

export default function App() {
  return (
    <div className={clsx("flex h-[500px] w-[625px] flex-col overflow-hidden bg-[#f0f0f0] leading-none", UI)}>
      <Header />
      <Toolbar />
      <DrawBar />
      <Chart />
      <Tabs />
      <StatusBar />
      <Taskbar />
    </div>
  );
}
